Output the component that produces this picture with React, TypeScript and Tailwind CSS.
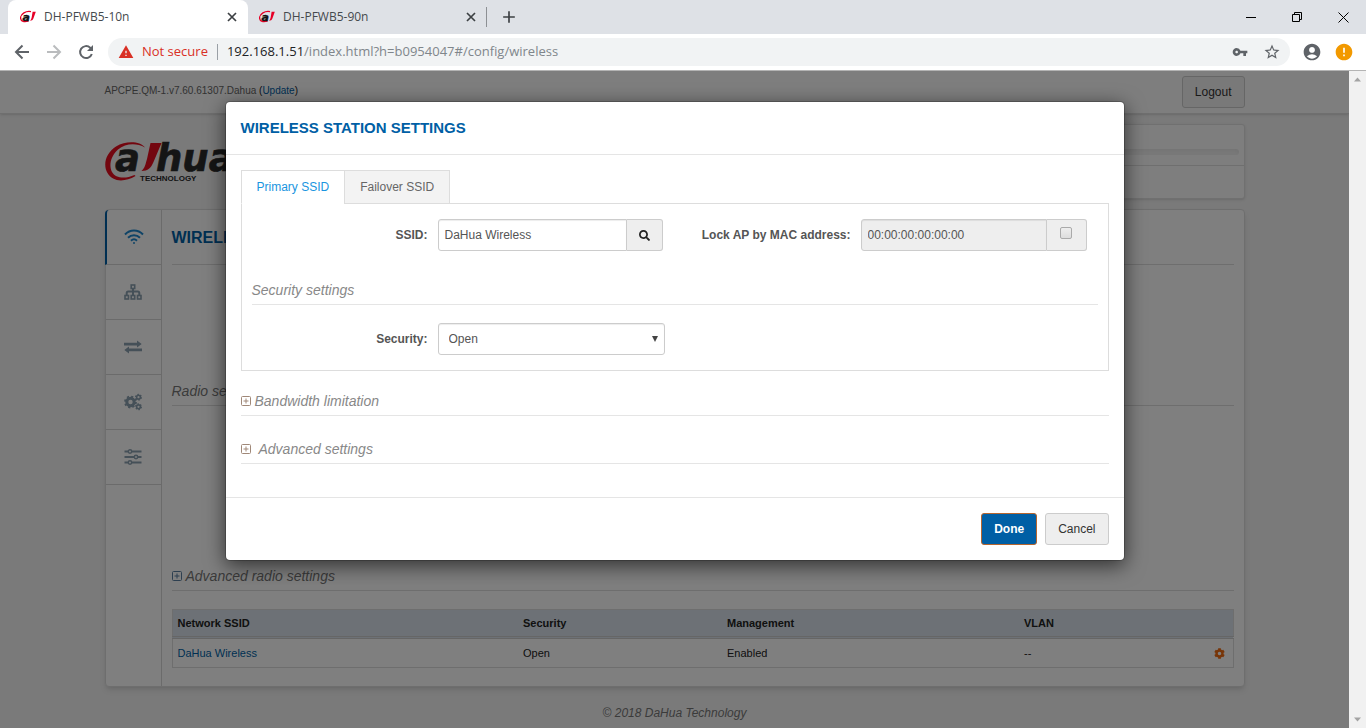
import React from 'react';
import { MdAccountCircle, MdAdd, MdError, MdStarBorder, MdVpnKey, MdWarning } from 'react-icons/md';
import { FaCog, FaSearch } from 'react-icons/fa';

const browserTabs = [
  { title: 'DH-PFWB5-10n', active: true },
  { title: 'DH-PFWB5-90n', active: false },
];

const networks = [
  { ssid: 'DaHua Wireless', security: 'Open', management: 'Enabled', vlan: '--' },
];

const Favicon: React.FC = () => (
  <svg width="16" height="16" viewBox="0 0 16 16" className="shrink-0">
    <path d="M11 2.6C6 1.6.6 4.800.6 8.900c0 3.600 4 4.500 8 2.900" fill="none" stroke="#e60027" strokeWidth="1.300" />
    <text x="2.600" y="11.500" fontSize="11" fontWeight="bold" fontStyle="italic" fontFamily="DejaVu Sans" fill="#111" stroke="#111" strokeWidth=".4">
      a
    </text>
    <path d="M12.600 2.800h3.200L13.400 9.500c-.6 1.500-1.700 2.200-3.400 2.300 1-.9 1.300-2 1.700-3.500z" fill="#e60027" />
  </svg>
);

const Logo: React.FC = () => (
  <svg width="170" height="44" viewBox="0 0 170 44" role="img" aria-label="Dahua Technology">
    <path
      d="M40 7.500C35 1 21 .5 11 6.500 1 13-2.500 24 2.500 33c5 9 17 9.500 28 3l-1-1c-9 4-19 3.500-22.500-3C3.500 25 6 16 13 9.500 20.500 3.500 31 2.500 40 7.500z"
      fill="#e60d1e"
    />
    <g fontFamily="DejaVu Sans" fontStyle="italic" fontWeight="bold" fontSize="37" fill="#2a2a2a" stroke="#2a2a2a" strokeWidth=".6">
      <text x="10" y="30.500">a</text>
      <text x="51" y="30.500">hua</text>
    </g>
    <path d="M45.500 3h11l-8 19c-2.500 6-5.500 9-12 9 3.500-3 4-7 5.500-12z" fill="#e60d1e" />
    <text x="35" y="41" fontFamily="Liberation Sans" fontWeight="bold" fontSize="8" fill="#2a2a2a">
      TECHNOLOGY
    </text>
  </svg>
);

const BackIcon: React.FC = () => (
  <svg width="20" height="20" viewBox="0 0 20 20" fill="none" stroke="currentColor" strokeWidth="2">
    <path d="M17 10H4.500M10.500 3.500L4 10l6.500 6.500" />
  </svg>
);

const ForwardIcon: React.FC = () => (
  <svg width="20" height="20" viewBox="0 0 20 20" fill="none" stroke="currentColor" strokeWidth="2">
    <path d="M3 10h12.500M9.500 3.500L16 10l-6.500 6.500" />
  </svg>
);

const ReloadIcon: React.FC = () => (
  <svg width="20" height="20" viewBox="0 0 20 20" fill="none" stroke="currentColor" strokeWidth="2">
    <path d="M15.800 12a6 6 0 1 1-1.600-6.300l1.800 1.800" />
    <path d="M17 3v6h-6z" fill="currentColor" stroke="none" />
  </svg>
);

const TabCloseIcon: React.FC = () => (
  <svg width="14" height="14" viewBox="0 0 14 14" fill="none" stroke="currentColor" strokeWidth="1.700">
    <path d="M3 3l8 8M11 3l-8 8" />
  </svg>
);

const WifiIcon: React.FC = () => (
  <svg width="20" height="16" viewBox="0 0 20 16" fill="none" stroke="#1e88cf" strokeWidth="2">
    <path d="M1 5.500c5-5.300 13-5.300 18 0M4 8.700c3.400-3.400 8.600-3.400 12 0M7 11.700c1.800-1.700 4.200-1.700 6 0" />
    <circle cx="10" cy="14" r="1" fill="#1e88cf" stroke="none" />
  </svg>
);

const SitemapIcon: React.FC = () => (
  <svg width="18" height="16" viewBox="0 0 18 16" fill="none" stroke="#8ba0b0" strokeWidth="1.600">
    <rect x="7.200" y="1" width="3.500" height="3.500" />
    <rect x="1" y="11.500" width="3.500" height="3.500" />
    <rect x="7.200" y="11.500" width="3.500" height="3.500" />
    <rect x="13.500" y="11.500" width="3.500" height="3.500" />
    <path d="M9 4.500v7M2.700 11.500V9q0-1.500 1.500-1.500h9.600q1.500 0 1.500 1.500v2.500" strokeWidth="2" />
  </svg>
);

const ExchangeIcon: React.FC = () => (
  <svg width="18" height="14" viewBox="0 0 18 14" fill="#8ba0b0">
    <path d="M0 2.700h13V.4L17.700 4.100 13 7.500V5.500H0zM18 8.500H5V6.500L.3 9.900 5 13.600v-2.300h13z" />
  </svg>
);

const CogsIcon: React.FC = () => (
  <svg width="18" height="18" viewBox="0 0 18 18" fill="none" stroke="#8ba0b0">
    <circle cx="6.500" cy="9" r="3.700" strokeWidth="3" />
    <circle cx="6.500" cy="9" r="5.500" strokeWidth="1.800" strokeDasharray="2.160 2.160" />
    <circle cx="14.500" cy="4.200" r="1.900" strokeWidth="1.600" />
    <circle cx="14.500" cy="4.200" r="2.900" strokeWidth="1.200" strokeDasharray="1.500 1.540" />
    <circle cx="14.500" cy="13.800" r="1.900" strokeWidth="1.600" />
    <circle cx="14.500" cy="13.800" r="2.900" strokeWidth="1.200" strokeDasharray="1.500 1.540" />
  </svg>
);

const SlidersIcon: React.FC = () => (
  <svg width="18" height="16" viewBox="0 0 18 16" fill="none" stroke="#8ba0b0" strokeWidth="2">
    <path d="M.5 2.500h4M8 2.500h9.500M.5 8h9.500M14 8h3.500M.5 13.500h4M8 13.500h9.500" />
    <circle cx="6" cy="2.500" r="1.700" strokeWidth="1.500" />
    <circle cx="12" cy="8" r="1.700" strokeWidth="1.500" />
    <circle cx="6" cy="13.500" r="1.700" strokeWidth="1.500" />
  </svg>
);

const PlusBox: React.FC<{ color: string }> = ({ color }) => (
  <svg width="10" height="10" viewBox="0 0 10 10" fill="none" stroke={color} className="shrink-0">
    <rect x=".5" y=".5" width="9" height="9" rx="1" />
    <path d="M2.500 5h5M5 2.500v5" />
  </svg>
);

const sideItems = [
  { label: 'Wireless', icon: WifiIcon },
  { label: 'Network', icon: SitemapIcon },
  { label: 'Routing', icon: ExchangeIcon },
  { label: 'Services', icon: CogsIcon },
  { label: 'System', icon: SlidersIcon },
];

const Browser: React.FC = () => (
  <header className="shrink-0 border-b border-[#b4b4b4] bg-white font-['Open_Sans',sans-serif]">
    <div className="flex h-[34px] items-center bg-[#dee1e6] pl-2">
      {browserTabs.map((tab) => (
        <div
          key={tab.title}
          className={
            tab.active
              ? 'flex h-full w-60 items-center gap-2 rounded-t-lg bg-white pr-[9px] pl-3'
              : 'flex h-5 w-[239px] items-center gap-2 border-r border-[#8d9094] pr-2 pl-[11px]'
          }
        >
          <Favicon />
          <span className="flex-1 text-[12px] text-[#45494d]">{tab.title}</span>
          <button aria-label="Close tab" className="text-[#3c4043]">
            <TabCloseIcon />
          </button>
        </div>
      ))}
      <button aria-label="New tab" className="ml-3 text-[#3c4043]">
        <MdAdd size={20} />
      </button>
      <div className="ml-auto flex h-7 items-center text-black">
        <button aria-label="Minimize" className="flex w-[46px] justify-center">
          <svg width="10" height="10" stroke="currentColor">
            <path d="M0 5.500h10" />
          </svg>
        </button>
        <button aria-label="Restore" className="flex w-[46px] justify-center">
          <svg width="10" height="10" fill="none" stroke="currentColor">
            <path d="M.5 2.500h7v7h-7zM2.500 2.500v-2h7v7h-2" />
          </svg>
        </button>
        <button aria-label="Close" className="flex w-[46px] justify-center">
          <svg width="11" height="11" stroke="currentColor">
            <path d="M.5.5l10 10M10.500.5l-10 10" />
          </svg>
        </button>
      </div>
    </div>

    <div className="flex h-9 items-center gap-3 pr-3 pl-3 text-[#5f6368]">
      <button aria-label="Back">
        <BackIcon />
      </button>
      <button aria-label="Forward" className="text-[#babcbe]">
        <ForwardIcon />
      </button>
      <button aria-label="Reload">
        <ReloadIcon />
      </button>
      <div className="flex h-7 flex-1 items-center rounded-full bg-[#f1f3f4] pr-[9px] pl-[10px] text-[13px]">
        <MdWarning size={16} className="text-[#d93025]" />
        <span className="ml-2 text-[#d93025]">Not secure</span>
        <span className="mx-[9px] h-4 w-px bg-[#9aa0a6]" />
        <span className="flex-1 text-[#80868b]">
          <span className="text-[#202124]">192.168.1.51</span>/index.html?h=b0954047#/config/wireless
        </span>
        <MdVpnKey size={16} />
        <MdStarBorder size={18} className="ml-[15px]" />
      </div>
      <MdAccountCircle size={20} />
      <MdError size={20} className="text-[#f29900]" />
    </div>
  </header>
);

const Page: React.FC = () => (
  <div className="bg-[#f4f4f4] text-[11px] text-[#222]">
    <div className="h-[43px] border-b border-[#dedede] bg-[#fcfcfc] shadow-sm">
      <div className="mx-auto flex max-w-[1140px] items-start justify-between">
        <p className="pt-3 text-[10px] leading-4 text-[#666]">
          APCPE.QM-1.v7.60.61307.Dahua{' '}
          <span className="text-[#222]">
            (
            <a href="#update" className="text-[#005fa5]">
              Update
            </a>
            )
          </span>
        </p>
        <button className="mt-[5px] h-8 rounded-[3px] border border-[#ccc] bg-[#f3f3f3] px-3 text-[12px] text-[#333]">
          Logout
        </button>
      </div>
    </div>

    <div className="mx-auto max-w-[1140px] pt-[10px]">
      <div className="flex items-start justify-between">
        <div className="pt-4">
          <Logo />
        </div>
        <div className="h-[75px] w-1/2 rounded-[3px] border border-[#e0e0e0] bg-[#fcfcfc] shadow-sm">
          <div className="h-[41px] border-b border-[#dedede] px-[5px] pt-6">
            <div className="h-[6px] rounded-full bg-[#f3f3f3] shadow-inner" />
          </div>
        </div>
      </div>

      <div className="mt-[10px] flex rounded-[4px] border border-[#ddd] bg-white shadow-md">
        <nav className="w-14 shrink-0 border-r border-[#d6d6d6]">
          {sideItems.map(({ label, icon: Icon }, index) => (
            <a
              key={label}
              href={'#' + label.toLowerCase()}
              aria-label={label}
              className={
                index === 0
                  ? '-ml-px flex h-[55px] items-center justify-center rounded-tl-[4px] border-b border-l-2 border-b-[#d6d6d6] border-l-[#005fa5]'
                  : 'flex h-[55px] items-center justify-center border-b border-[#d6d6d6]'
              }
            >
              <Icon />
            </a>
          ))}
        </nav>
        <main className="flex-1 px-[10px] pb-[18px]">
          <h1 className="flex h-[55px] items-center border-b border-[#ddd] pt-[2px] text-[16px] font-bold text-[#005fa5]">
            WIRELESS SETTINGS
          </h1>
          <h2 className="mt-[110px] border-b border-[#ddd] pt-[5px] pb-[3px] text-[14px] leading-[22px] text-[#777] italic">
            Radio settings
          </h2>
          <h2 className="mt-[154px] flex items-center gap-1 border-b border-[#ddd] pt-[5px] pb-[3px] text-[14px] leading-[22px] text-[#777] italic">
            <PlusBox color="#5a7fa0" />
            Advanced radio settings
          </h2>
          <table className="mt-[18px] w-full border border-[#ddd]">
            <thead>
              <tr className="h-7 border-b-[3px] border-double border-[#ccc] bg-[#dbe3ec] text-left">
                <th className="w-[346px] px-[5px]">Network SSID</th>
                <th className="w-[204px] px-[5px]">Security</th>
                <th className="w-[297px] px-[5px]">Management</th>
                <th className="px-[5px]">VLAN</th>
                <th className="w-10" aria-label="Actions" />
              </tr>
            </thead>
            <tbody>
              {networks.map((network) => (
                <tr key={network.ssid} className="h-[30px]">
                  <td className="px-[5px]">
                    <a href="#network" className="text-[#005fa5]">
                      {network.ssid}
                    </a>
                  </td>
                  <td className="px-[5px]">{network.security}</td>
                  <td className="px-[5px]">{network.management}</td>
                  <td className="px-[5px]">{network.vlan}</td>
                  <td className="pr-2">
                    <button aria-label="Edit network" className="ml-auto block text-[#ef6a10]">
                      <FaCog size={11} />
                    </button>
                  </td>
                </tr>
              ))}
            </tbody>
          </table>
        </main>
      </div>

      <footer className="py-[18px] text-center text-[12px] leading-4 text-[#777] italic">
        © 2018 DaHua Technology
      </footer>
    </div>
  </div>
);

const Modal: React.FC = () => (
  <div
    role="dialog"
    aria-labelledby="dialog-title"
    className="mx-auto mt-[30px] max-w-[900px] rounded-[5px] border border-black/20 bg-white bg-clip-padding text-[12px] text-[#555] shadow-[0_5px_20px_rgba(0,0,0,0.6)]"
  >
    <h2 id="dialog-title" className="border-b border-[#e5e5e5] px-[15px] py-4 text-[15px] leading-5 font-bold text-[#005fa5]">
      WIRELESS STATION SETTINGS
    </h2>

    <div className="px-[15px] pt-[15px] pb-[33px]">
      <div role="tablist" className="flex">
        <button
          role="tab"
          aria-selected="true"
          className="z-10 h-[34px] border-y border-l border-[#ddd] border-b-white bg-white px-[15px] text-[#1a95e0]"
        >
          Primary SSID
        </button>
        <button role="tab" aria-selected="false" className="h-[34px] border border-[#ddd] bg-[#f3f3f3] px-[15px] text-[#666]">
          Failover SSID
        </button>
      </div>

      <div role="tabpanel" className="-mt-px border border-[#ddd] px-[10px] py-[15px]">
        <div className="grid grid-cols-2">
          <div className="flex items-center pr-3">
            <label htmlFor="ssid" className="w-[186px] shrink-0 pr-[10px] text-right font-bold">
              SSID:
            </label>
            <input
              id="ssid"
              defaultValue="DaHua Wireless"
              className="h-8 min-w-0 flex-1 rounded-l-[3px] border border-[#ccc] px-[6px] shadow-[inset_0_1px_1px_rgba(0,0,0,0.075)]"
            />
            <button
              aria-label="Scan"
              className="flex h-8 w-9 items-center justify-center rounded-r-[3px] border border-l-0 border-[#ccc] bg-[#eee] text-[#222]"
            >
              <FaSearch size={11} />
            </button>
          </div>
          <div className="flex items-center pr-[11px]">
            <label htmlFor="mac" className="w-[186px] shrink-0 pr-[10px] text-right font-bold">
              Lock AP by MAC address:
            </label>
            <input
              id="mac"
              disabled
              defaultValue="00:00:00:00:00:00"
              className="h-8 min-w-0 flex-1 rounded-l-[3px] border border-[#ccc] bg-[#eee] px-[6px] shadow-[inset_0_1px_1px_rgba(0,0,0,0.075)]"
            />
            <div className="flex h-8 w-10 items-center justify-center rounded-r-[3px] border border-l-0 border-[#ccc] bg-[#eee]">
              <input
                type="checkbox"
                aria-label="Lock AP"
                className="mb-1 h-3 w-3 appearance-none rounded-[2px] border border-[#aaa] bg-linear-to-b from-[#eee] to-[#ddd]"
              />
            </div>
          </div>
        </div>

        <h3 className="mt-[23px] border-b border-[#e5e5e5] pt-[5px] pb-[3px] text-[14px] leading-[22px] text-[#888] italic">
          Security settings
        </h3>

        <div className="mt-[18px] grid grid-cols-2">
          <div className="flex items-center pr-[10px]">
            <label htmlFor="security" className="w-[186px] shrink-0 pr-[10px] text-right font-bold">
              Security:
            </label>
            <div className="relative flex-1">
              <select
                id="security"
                className="h-8 w-full appearance-none rounded-[3px] border border-[#ccc] bg-white px-[10px] shadow-[inset_0_1px_1px_rgba(0,0,0,0.075)]"
              >
                <option>Open</option>
              </select>
              <svg width="6" height="6" className="pointer-events-none absolute top-[13px] right-[7px]" fill="#444">
                <path d="M0 0h6L3 6z" />
              </svg>
            </div>
          </div>
        </div>
      </div>

      <h3 className="mt-[14px] border-b border-[#e5e5e5] pt-[5px] pb-[3px] text-[14px] leading-[22px] text-[#888] italic">
        <button className="flex items-center gap-1">
          <PlusBox color="#a08878" />
          Bandwidth limitation
        </button>
      </h3>
      <h3 className="mt-[17px] border-b border-[#e5e5e5] pt-[5px] pb-[3px] text-[14px] leading-[22px] text-[#888] italic">
        <button className="flex items-center gap-2">
          <PlusBox color="#a08878" />
          Advanced settings
        </button>
      </h3>
    </div>

    <div className="flex justify-end gap-2 border-t border-[#e5e5e5] px-[15px] py-[15px]">
      <button className="h-8 rounded-[3px] border border-[#b5652f] bg-[#005fa5] px-3 font-bold text-white">Done</button>
      <button className="h-8 rounded-[3px] border border-[#ccc] bg-[#eee] px-3 text-[#333]">Cancel</button>
    </div>
  </div>
);

const App: React.FC = () => (
  <div className="flex h-screen flex-col overflow-hidden font-['Liberation_Sans',Arial,sans-serif]">
    <Browser />
    <div className="flex min-h-0 flex-1 bg-[#f4f4f4]">
      <div className="relative flex-1 overflow-hidden">
        <Page />
        {/* Backdrop and dialog */}
        <div className="absolute inset-0 bg-black/50">
          <Modal />
        </div>
      </div>
      <div className="flex w-[17px] flex-col items-center justify-between bg-[#f1f1f1] py-[6px]">
        <svg width="7" height="5" fill="#a3a3a3">
          <path d="M0 4.500L3.500.5 7 4.500z" />
        </svg>
        <svg width="7" height="5" fill="#a3a3a3">
          <path d="M0 .5L3.500 4.500 7 .5z" />
        </svg>
      </div>
    </div>
  </div>
);

export default App;
